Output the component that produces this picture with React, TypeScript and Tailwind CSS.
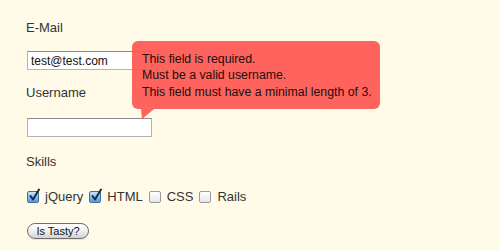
import React from 'react';

const Checkbox: React.FC<{ checked?: boolean }> = ({ checked }) => (
  <span className="relative inline-block w-[12px] h-[12px] shrink-0">
    {checked ? (
      <span className="absolute inset-0 rounded-[2px] border border-[#3a6ea8] bg-gradient-to-b from-[#cfe3f7] via-[#8cbaea] to-[#5e98d8]" />
    ) : (
      <span className="absolute inset-0 rounded-[2px] border border-[#9a9a9a] bg-gradient-to-b from-[#ffffff] to-[#e6e6e6]" />
    )}
    {checked && (
      <svg className="absolute left-[1px] top-[-3px]" width="13" height="14" viewBox="0 0 13 14">
        <path d="M2.5 8 L5 11.5 L11 1.5" fill="none" stroke="#1b2a44" strokeWidth="2" strokeLinecap="round" strokeLinejoin="round" />
      </svg>
    )}
  </span>
);

const skills = [
  { name: 'jQuery', checked: true },
  { name: 'HTML', checked: true },
  { name: 'CSS', checked: false },
  { name: 'Rails', checked: false },
];

export default function App() {
  return (
    <div className="relative w-[500px] h-[250px] overflow-hidden bg-[#fffbe8] pl-[26px] pt-[20px] text-[#333] font-['Liberation_Sans',Arial,sans-serif]">
      <label className="block h-4 text-[13px] leading-4">E-Mail</label>
      <input
        readOnly
        value="test@test.com"
        className="block mt-[15px] ml-px w-[125px] h-[19px] px-[3px] bg-white border border-[#b4b4b4] border-t-[#8a8a8a] text-[12px] text-[#111] outline-none"
      />

      <label className="block mt-[15px] h-4 text-[13px] leading-4">Username</label>
      <input
        readOnly
        value=""
        className="block mt-[17px] ml-px w-[125px] h-[19px] px-[3px] bg-white border border-[#b4b4b4] border-t-[#8a8a8a] text-[12px] outline-none"
      />

      <label className="block mt-[17px] h-4 text-[13px] leading-4">Skills</label>

      <div className="mt-[20px] flex items-center h-[14px] text-[13px] leading-4">
        {skills.map((s, i) => (
          <span key={s.name} className={`flex items-center ${i > 0 ? 'ml-[6px]' : 'ml-px'}`}>
            <Checkbox checked={s.checked} />
            <span className="ml-[6px]">{s.name}</span>
          </span>
        ))}
      </div>

      <button className="mt-[19px] ml-px w-[62px] h-[16px] rounded-full border border-[#6e6e6e] bg-gradient-to-b from-[#ffffff] via-[#f0f0f0] to-[#d2d2d2] text-[11px] leading-[14px] text-[#111] shadow-[0_1px_0_rgba(0,0,0,0.08)]">
        Is Tasty?
      </button>

      {/* error tooltip */}
      <div className="absolute left-[132px] top-[41px] w-[248px] h-[68px] rounded-[6px] bg-[rgba(255,82,78,0.9)] pl-[10px] pt-[10px] text-[12.3px] leading-[16.3px] text-[#1a1010]">
        <div>This field is required.</div>
        <div>Must be a valid username.</div>
        <div>This field must have a minimal length of 3.</div>
      </div>
      <svg className="absolute left-[141px] top-[109px]" width="14" height="11" viewBox="0 0 14 11">
        <polygon points="0,0 13,0 1,10" fill="rgba(255,82,78,0.9)" />
      </svg>
    </div>
  );
}
